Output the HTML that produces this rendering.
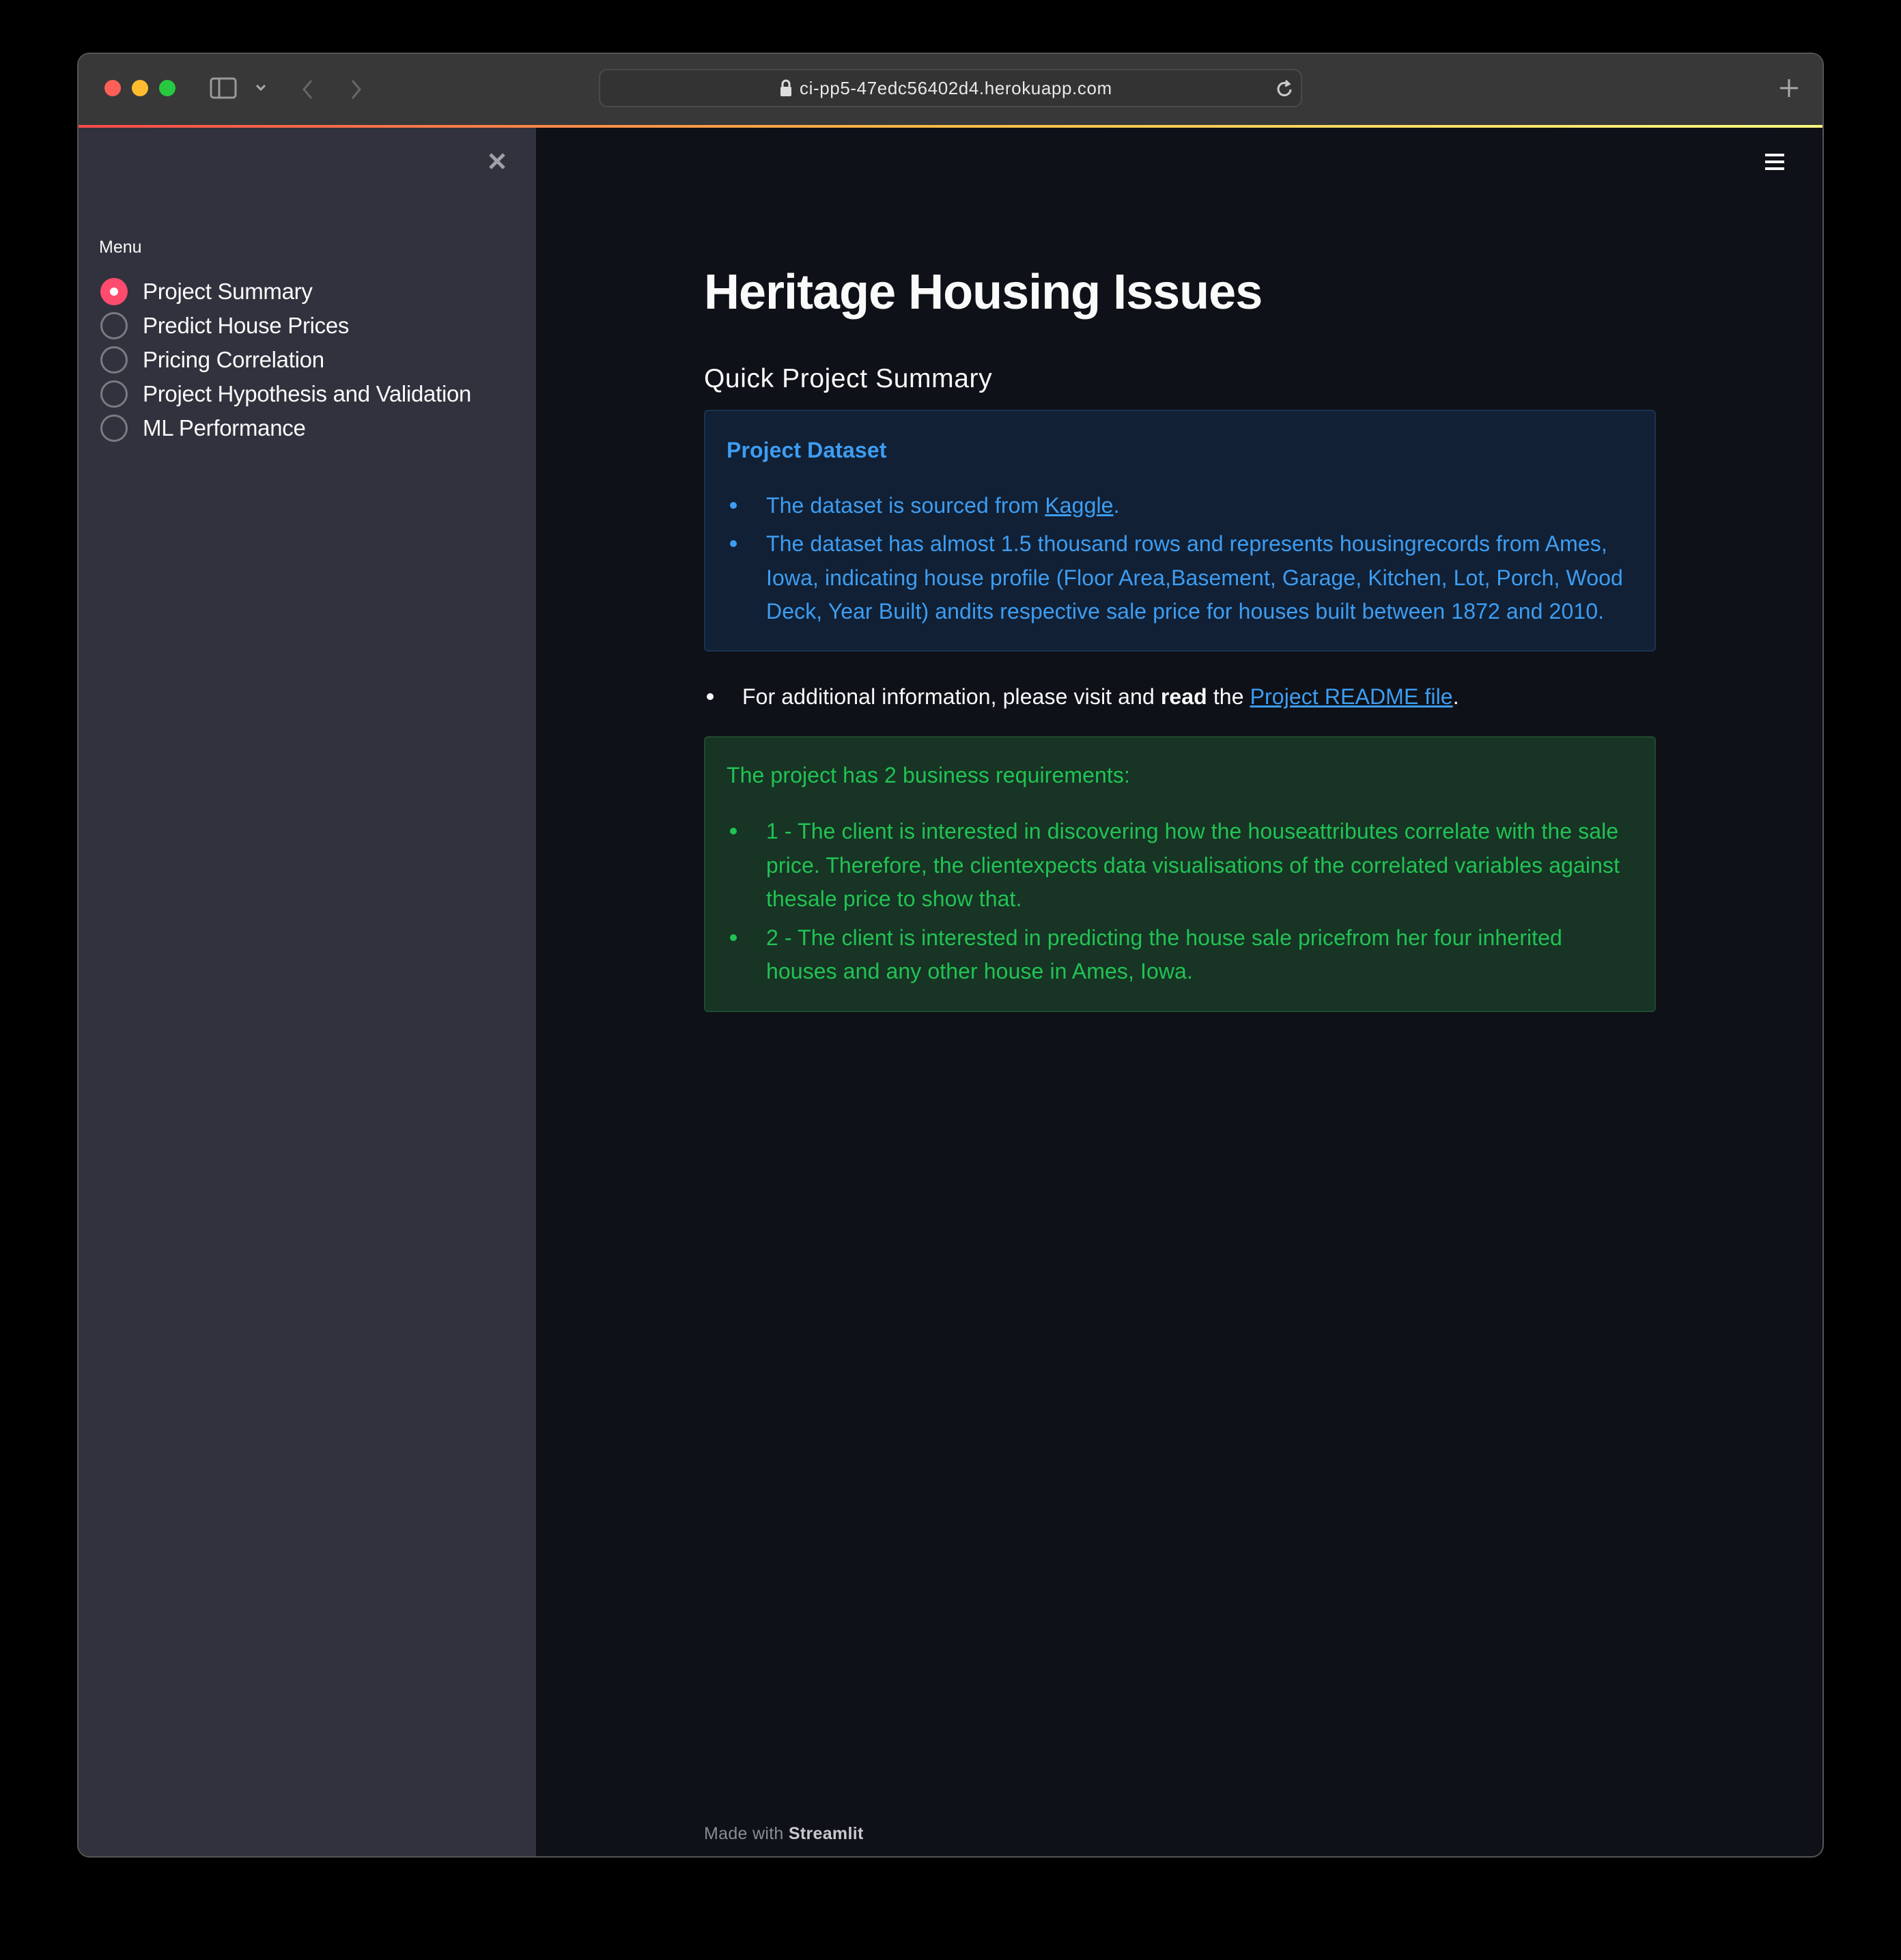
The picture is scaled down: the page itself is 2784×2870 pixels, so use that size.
<!DOCTYPE html>
<html><head><meta charset="utf-8"><style>
*{margin:0;padding:0;box-sizing:border-box}
body{width:2784px;height:2870px;background:#000;position:relative;overflow:hidden;font-family:"Liberation Sans",sans-serif}
.a{position:absolute;white-space:nowrap}
.t{line-height:50px;height:50px;font-size:32px;letter-spacing:0.1px}
.win{position:absolute;left:113px;top:77px;width:2558px;height:2643px;border-radius:18px;overflow:hidden;background:#0e1117;border:2px solid #555}
.bar{position:absolute;left:0;top:0;width:100%;height:104px;background:#383838}
.grad{position:absolute;left:0;top:104px;width:100%;height:4px;background:linear-gradient(90deg,#ff4b4b,#ffbd45,#fffd80)}
.side{position:absolute;left:0;top:108px;width:670px;height:2600px;background:#31323d}
.dot{position:absolute;width:24px;height:24px;border-radius:50%;top:38px}
.radio{position:absolute;width:40px;height:40px;border-radius:50%;border:3px solid #7a7b82}
.blt{position:absolute;width:10px;height:10px;border-radius:50%}
.s{font-size:33px;color:#fafafa;letter-spacing:-0.3px}
</style></head><body>
<div class="win">
 <div class="bar">
  <div class="dot" style="left:38px;background:#fe5f57"></div>
  <div class="dot" style="left:78px;background:#febc2e"></div>
  <div class="dot" style="left:118px;background:#28c840"></div>
  <svg class="a" style="left:192px;top:34px" width="40" height="34" viewBox="0 0 40 34"><rect x="2" y="2" width="36" height="28" rx="4" fill="none" stroke="#9a9a9a" stroke-width="3"/><line x1="14" y1="2" x2="14" y2="30" stroke="#9a9a9a" stroke-width="3"/></svg>
  <svg class="a" style="left:258px;top:42px" width="18" height="14"><path d="M3 4l6 6 6-6" fill="none" stroke="#aaa" stroke-width="3"/></svg>
  <svg class="a" style="left:325px;top:36px" width="20" height="32"><path d="M16 3L5 16l11 13" fill="none" stroke="#666" stroke-width="3"/></svg>
  <svg class="a" style="left:397px;top:36px" width="20" height="32"><path d="M4 3l11 13L4 29" fill="none" stroke="#666" stroke-width="3"/></svg>
  <div class="a" style="left:762px;top:22px;width:1030px;height:56px;border-radius:12px;background:#333;border:2px solid #4a4a4a"></div>
  <svg class="a" style="left:1025px;top:36px" width="22" height="28"><path d="M6 12V8a5 5 0 0 1 10 0v4" fill="none" stroke="#ddd" stroke-width="3"/><rect x="3" y="12" width="16" height="14" rx="2" fill="#ddd"/></svg>
  <div class="a" style="left:1056px;top:33px;font-size:26px;line-height:34px;color:#e8e8e8;letter-spacing:0.6px">ci-pp5-47edc56402d4.herokuapp.com</div>
  <svg class="a" style="left:1753px;top:36px" width="28" height="30"><path d="M22 16a9 9 0 1 1-4-8" fill="none" stroke="#ccc" stroke-width="3"/><path d="M15 3l5 5-6 3" fill="none" stroke="#ccc" stroke-width="3"/></svg>
  <svg class="a" style="left:2490px;top:35px" width="30" height="30"><path d="M15 2v26M2 15h26" stroke="#aaa" stroke-width="3"/></svg>
 </div>
 <div class="grad"></div>
 <div class="side">
  <svg class="a" style="left:599px;top:35px" width="28" height="28"><path d="M4 4l20 20M24 4L4 24" stroke="#a0a1a8" stroke-width="5"/></svg>
  <div class="a" style="left:30px;top:160px;font-size:25px;line-height:30px;color:#fafafa">Menu</div>
 </div>
 <div class="a" style="left:32px;top:328px;width:40px;height:40px;border-radius:50%;background:#ff4b6e"></div>
 <div class="a" style="left:46px;top:342px;width:12px;height:12px;border-radius:50%;background:#fff"></div>
 <div class="radio" style="left:32px;top:378px"></div>
 <div class="radio" style="left:32px;top:428px"></div>
 <div class="radio" style="left:32px;top:478px"></div>
 <div class="radio" style="left:32px;top:528px"></div>
 <div class="a t s" style="left:94px;top:323px">Project Summary</div>
 <div class="a t s" style="left:94px;top:373px">Predict House Prices</div>
 <div class="a t s" style="left:94px;top:423px">Pricing Correlation</div>
 <div class="a t s" style="left:94px;top:473px">Project Hypothesis and Validation</div>
 <div class="a t s" style="left:94px;top:523px">ML Performance</div>

 <div class="a" style="left:2470px;top:146px;width:28px;height:4px;background:#fafafa;box-shadow:0 10px 0 #fafafa,0 20px 0 #fafafa"></div>

 <div class="a" style="left:916px;top:304px;font-size:72px;line-height:90px;font-weight:bold;color:#fafafa;letter-spacing:-1px">Heritage Housing Issues</div>
 <div class="a" style="left:916px;top:452px;font-size:39px;line-height:48px;color:#fafafa;letter-spacing:0.6px">Quick Project Summary</div>

 <div class="a" style="left:916px;top:521px;width:1394px;height:354px;background:#112034;border:2px solid #1b3352;border-radius:6px"></div>
 <div class="a t" style="left:949px;top:555px;font-weight:bold;color:#3d9df3;font-size:32px">Project Dataset</div>
 <div class="blt" style="left:954px;top:656px;background:#3d9df3"></div>
 <div class="a t" style="left:1007px;top:636px;color:#3d9df3">The dataset is sourced from <u>Kaggle</u>.</div>
 <div class="blt" style="left:954px;top:712px;background:#3d9df3"></div>
 <div class="a t" style="left:1007px;top:692px;color:#3d9df3">The dataset has almost 1.5 thousand rows and represents housingrecords from Ames,</div>
 <div class="a t" style="left:1007px;top:742px;color:#3d9df3">Iowa, indicating house profile (Floor Area,Basement, Garage, Kitchen, Lot, Porch, Wood</div>
 <div class="a t" style="left:1007px;top:791px;color:#3d9df3">Deck, Year Built) andits respective sale price for houses built between 1872 and 2010.</div>

 <div class="blt" style="left:920px;top:936px;background:#fafafa"></div>
 <div class="a t" style="left:972px;top:916px;color:#fafafa">For additional information, please visit and <b>read</b> the <u style="color:#3d9df3">Project README file</u>.</div>

 <div class="a" style="left:916px;top:999px;width:1394px;height:404px;background:#173424;border:2px solid #1f4a2e;border-radius:6px"></div>
 <div class="a t" style="left:949px;top:1031px;color:#21c354">The project has 2 business requirements:</div>
 <div class="blt" style="left:954px;top:1133px;background:#21c354"></div>
 <div class="a t" style="left:1007px;top:1113px;color:#21c354">1 - The client is interested in discovering how the houseattributes correlate with the sale</div>
 <div class="a t" style="left:1007px;top:1163px;color:#21c354">price. Therefore, the clientexpects data visualisations of the correlated variables against</div>
 <div class="a t" style="left:1007px;top:1212px;color:#21c354">thesale price to show that.</div>
 <div class="blt" style="left:954px;top:1289px;background:#21c354"></div>
 <div class="a t" style="left:1007px;top:1269px;color:#21c354">2 - The client is interested in predicting the house sale pricefrom her four inherited</div>
 <div class="a t" style="left:1007px;top:1318px;color:#21c354">houses and any other house in Ames, Iowa.</div>

 <div class="a" style="left:916px;top:2590px;font-size:25px;line-height:32px;color:#8a8c94;letter-spacing:0.3px">Made with <span style="color:#c8c9cd;font-weight:bold">Streamlit</span></div>
</div>
</body></html>
